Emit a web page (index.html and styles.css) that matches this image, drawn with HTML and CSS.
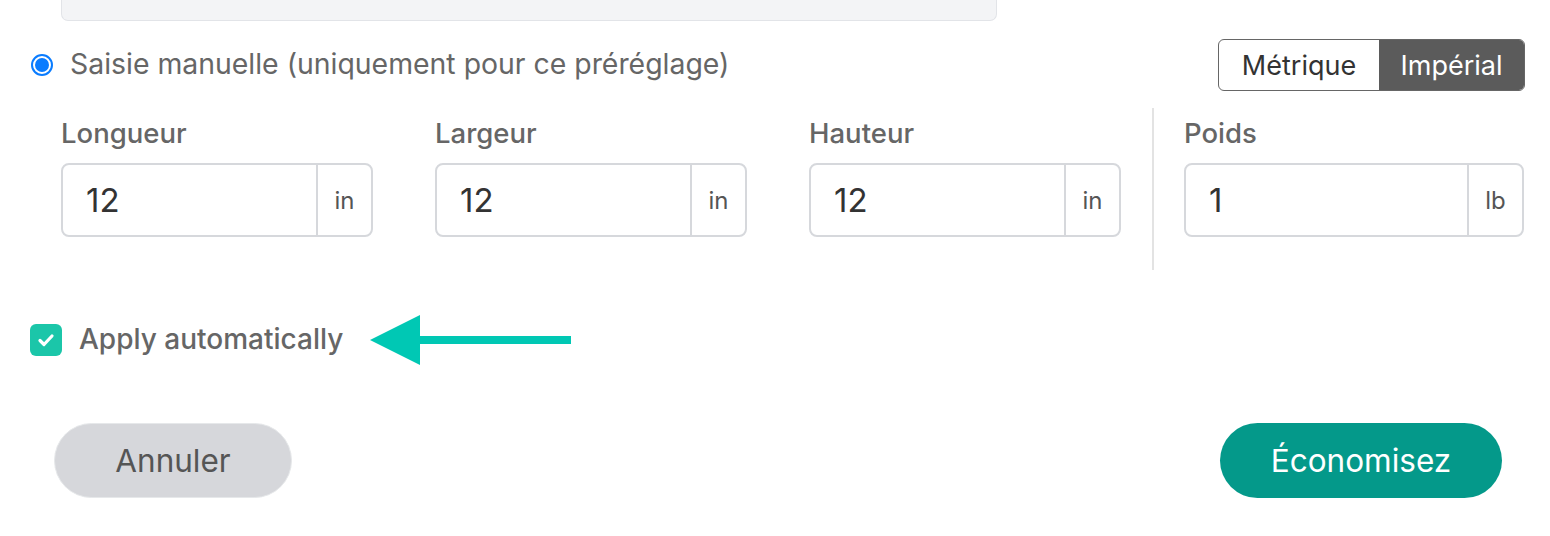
FILE: index.html
```html
<!DOCTYPE html>
<html lang="fr">
<head>
<meta charset="utf-8">
<link rel="stylesheet" href="styles.css">
</head>
<body>
<div class="wrap">
  <div class="topbox"></div>
  <div class="row1">
    <label class="radio"><span class="radio-dot"></span><span class="radio-label">Saisie manuelle (uniquement pour ce préréglage)</span></label>
    <div class="toggle">
      <span class="seg">Métrique</span>
      <span class="seg active">Impérial</span>
    </div>
  </div>
  <div class="fields">
    <div class="field">
      <div class="flabel">Longueur</div>
      <div class="input"><span class="val">12</span><span class="unit">in</span></div>
    </div>
    <div class="field">
      <div class="flabel">Largeur</div>
      <div class="input"><span class="val">12</span><span class="unit">in</span></div>
    </div>
    <div class="field">
      <div class="flabel">Hauteur</div>
      <div class="input"><span class="val">12</span><span class="unit">in</span></div>
    </div>
    <div class="divider"></div>
    <div class="field wide">
      <div class="flabel">Poids</div>
      <div class="input"><span class="val">1</span><span class="unit">lb</span></div>
    </div>
  </div>
  <div class="check-row">
    <span class="checkbox"><svg viewBox="0 0 32 32" width="32" height="32"><path d="M10 16.5l4 4 8-8.5" fill="none" stroke="#fff" stroke-width="3.2" stroke-linecap="round" stroke-linejoin="round"/></svg></span>
    <span class="check-label">Apply automatically</span>
    <svg class="arrow" viewBox="0 0 201 50" width="201" height="50"><polygon points="0,25 50,0 50,50" fill="#00c8b4"/><rect x="49" y="21" width="152" height="8" fill="#00c8b4"/></svg>
  </div>
  <div class="buttons">
    <button class="btn cancel">Annuler</button>
    <button class="btn save">Économisez</button>
  </div>
</div>
</body>
</html>
```
FILE: styles.css
```css
* { box-sizing: border-box; }
html, body { margin: 0; padding: 0; background: #fff; }
body {
  font-family: Inter, "Noto Sans", "Liberation Sans", sans-serif;
  color: #666;
  width: 1550px;
  height: 536px;
  overflow: hidden;
}
.wrap { padding: 0 25px 0 32px; }
.topbox {
  margin-left: 29px;
  width: 936px;
  height: 21px;
  background: #f3f4f6;
  border: 1px solid #e2e4e8;
  border-top: none;
  border-radius: 0 0 7px 7px;
}
.row1 {
  display: flex;
  justify-content: space-between;
  align-items: center;
  margin-top: 18px;
  height: 52px;
}
.radio { display: flex; align-items: center; }
.radio-dot {
  width: 22px; height: 22px;
  border-radius: 50%;
  border: 2px solid #0a7cff;
  margin-left: -1px;
  display: flex; align-items: center; justify-content: center;
}
.radio-dot::after {
  content: "";
  width: 14px; height: 14px;
  border-radius: 50%;
  background: #0a7cff;
}
.radio-label {
  margin-left: 17px;
  font-size: 28.4px;
  color: #666;
  margin-top: -4px;
}
.toggle {
  display: flex;
  height: 52px;
  border: 1.5px solid #666;
  border-radius: 6px;
  overflow: hidden;
}
.seg {
  display: flex; align-items: center; justify-content: center;
  font-size: 27px;
  color: #333;
  width: 160px;
}
.seg.active {
  background: #5b5b5b;
  color: #fff;
  width: 145px;
}
.fields {
  display: flex;
  margin-top: 17px;
  padding-left: 29px;
  height: 162px;
}
.field { width: 312px; padding-top: 10px; margin-right: 62px; }
.field:nth-child(3) { margin-right: 0; }
.field.wide { width: 340px; margin-right: 0; }
.divider {
  width: 2px;
  height: 162px;
  background: #e3e3e3;
  margin: 0 30px 0 31px;
}
.flabel {
  font-size: 27.5px;
  font-weight: 500;
  line-height: 30px;
  color: #666;
}
.input {
  margin-top: 15px;
  height: 74px;
  border: 2px solid #d6d8dc;
  border-radius: 8px;
  display: flex;
  align-items: stretch;
}
.val {
  flex: 1;
  display: flex; align-items: center;
  padding-left: 23px;
  font-size: 33px;
  color: #333;
}
.unit {
  width: 55px;
  border-left: 2px solid #d6d8dc;
  display: flex; align-items: center; justify-content: center;
  font-size: 24px;
  color: #555;
}
.check-row {
  display: flex;
  align-items: center;
  margin-top: 45px;
  height: 50px;
  margin-left: -2px;
}
.checkbox {
  width: 32px; height: 32px;
  border-radius: 6px;
  background: #1bc6a9;
  display: flex;
}
.check-label {
  margin-left: 17px;
  font-size: 28px;
  font-weight: 500;
  color: #666;
  margin-top: -2px;
}
.arrow { margin-left: 27px; }
.buttons {
  display: flex;
  justify-content: space-between;
  margin-top: 58px;
  padding: 0 23px 0 22px;
}
.btn {
  font-family: inherit;
  height: 75px;
  border-radius: 38px;
  font-size: 31.5px;
  cursor: pointer;
}
.cancel {
  width: 238px;
  background: #d6d7db;
  border: 1.5px solid #e6e8ea;
  color: #555;
}
.save {
  width: 282px;
  background: #04998a;
  border: none;
  color: #fff;
}
```
